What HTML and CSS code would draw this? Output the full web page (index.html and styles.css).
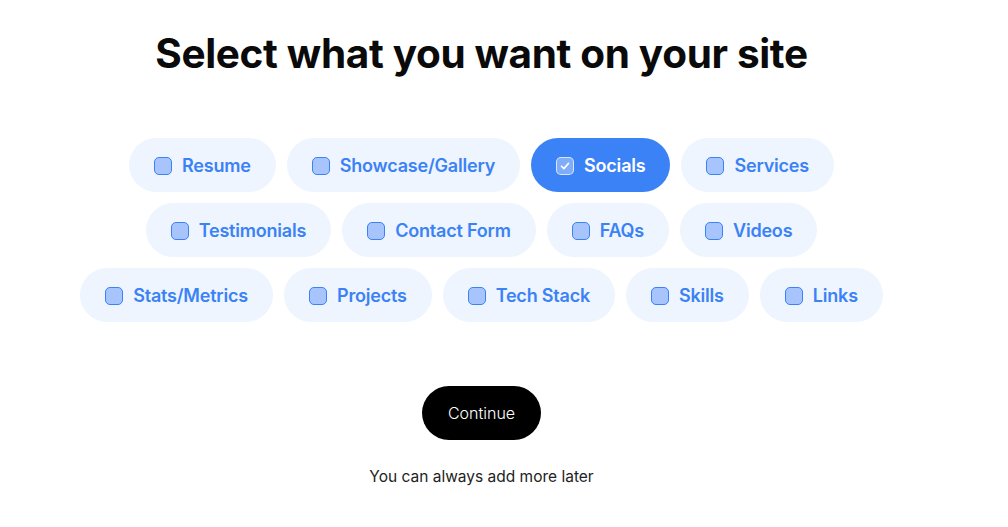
FILE: index.html
```html
<!DOCTYPE html>
<html lang="en">
<head>
<meta charset="utf-8">
<title>Select what you want on your site</title>
<link rel="stylesheet" href="styles.css">
</head>
<body>
<main class="page">
  <h1 class="title">Select what you want on your site</h1>
  <div class="chips">
    <div class="row">
      <button class="chip"><span class="box"></span>Resume</button>
      <button class="chip"><span class="box"></span>Showcase/Gallery</button>
      <button class="chip chip-on"><span class="box"><svg viewBox="0 0 16 16" width="16" height="16"><path d="M4.5 8.2l2.4 2.4 4.6-5.2" fill="none" stroke="#fff" stroke-width="1.6" stroke-linecap="round" stroke-linejoin="round"/></svg></span>Socials</button>
      <button class="chip"><span class="box"></span>Services</button>
    </div>
    <div class="row">
      <button class="chip"><span class="box"></span>Testimonials</button>
      <button class="chip"><span class="box"></span>Contact Form</button>
      <button class="chip"><span class="box"></span>FAQs</button>
      <button class="chip"><span class="box"></span>Videos</button>
    </div>
    <div class="row">
      <button class="chip"><span class="box"></span>Stats/Metrics</button>
      <button class="chip"><span class="box"></span>Projects</button>
      <button class="chip"><span class="box"></span>Tech Stack</button>
      <button class="chip"><span class="box"></span>Skills</button>
      <button class="chip"><span class="box"></span>Links</button>
    </div>
  </div>
  <button class="continue">Continue</button>
  <p class="note">You can always add more later</p>
</main>
</body>
</html>
```
FILE: styles.css
```css
html, body {
  margin: 0;
  padding: 0;
  background: #fff;
}
.page {
  width: 963px;
  display: flex;
  flex-direction: column;
  align-items: center;
  font-family: "Inter", "Liberation Sans", sans-serif;
}
.title {
  margin: 28px 0 0;
  font-size: 40.5px;
  font-weight: 700;
  letter-spacing: -0.35px;
  color: #0a0a0a;
  line-height: 52px;
}
.chips {
  margin-top: 58px;
  display: flex;
  flex-direction: column;
  align-items: center;
  gap: 11px;
}
.row {
  display: flex;
  gap: 11px;
  justify-content: center;
}
.chip {
  height: 54px;
  padding: 1px 25px 0;
  border: none;
  border-radius: 27px;
  background: #eef5ff;
  color: #3b82f6;
  font-family: "Inter", "Liberation Sans", sans-serif;
  font-size: 18px;
  font-weight: 600;
  display: flex;
  align-items: center;
  gap: 10px;
  letter-spacing: -0.2px;
}
.box {
  width: 16px;
  height: 16px;
  border: 1.6px solid #3b82f6;
  border-radius: 5px;
  background: #a7c5fc;
  display: flex;
  align-items: center;
  justify-content: center;
}
.chip-on {
  background: #3b82f6;
  color: #fff;
}
.chip-on .box {
  background: rgba(255,255,255,0.35);
  border-color: rgba(255,255,255,0.7);
}
.continue {
  margin-top: 64px;
  width: 119px;
  height: 54px;
  border: none;
  border-radius: 27px;
  background: #000;
  color: #fff;
  font-family: "Inter", "Liberation Sans", sans-serif;
  font-size: 16px;
  font-weight: 300;
  padding-top: 1px;
}
.note {
  margin: 27px 0 0;
  font-size: 15.5px;
  color: #222;
  font-weight: 400;
}
```
